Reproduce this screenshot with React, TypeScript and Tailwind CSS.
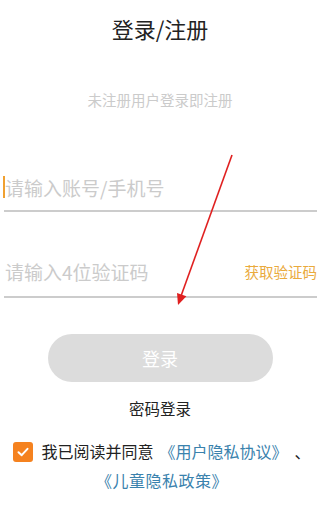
import React from "react";

export default function App() {
  return (
    <div
      className="relative w-[320px] h-[505px] overflow-hidden bg-white flex flex-col"
      style={{ fontFamily: '"Noto Sans CJK SC", "Noto Sans", sans-serif' }}
    >
      <div className="mt-[17px] text-center text-[22px] leading-[22px] text-[#222]">登录/注册</div>
      <div className="mt-[53px] text-center text-[14.5px] leading-[15px] text-[#cbcbcb]">未注册用户登录即注册</div>

      <div className="mt-[65px] ml-[4px] mr-[3px] pb-[8px] border-b-2 border-[#cccccc]">
        <div className="h-[30px] flex items-center">
          <span className="-ml-[1px] w-[2px] h-[22px] bg-[#f0a030]" />
          <span className="text-[19px] leading-[19px] text-[#cbcbcb]">请输入账号/手机号</span>
        </div>
      </div>

      <div className="mt-[44px] ml-[4px] mr-[3px] pb-[10px] border-b-2 border-[#cccccc]">
        <div className="h-[30px] flex items-center justify-between">
          <span className="ml-[1px] text-[19px] leading-[19px] text-[#cbcbcb]">请输入4位验证码</span>
          <span className="text-[14.5px] leading-[15px] text-[#eaaa3c]">获取验证码</span>
        </div>
      </div>

      <div className="mt-[36px] mx-auto w-[225px] h-[48px] rounded-full bg-[#dcdcdc] flex items-center justify-center">
        <span className="text-[18px] leading-[18px] text-white">登录</span>
      </div>

      <div className="mt-[18px] text-center text-[15.5px] leading-[16px] text-[#222]">密码登录</div>

      <div className="mt-[21px] flex items-center justify-center h-[29px] text-[16px] leading-[29px] pl-[4px]">
        <span className="w-[20px] h-[20px] rounded-[3px] bg-[#f5821f] flex items-center justify-center mr-[8px]">
          <svg width="14" height="14" viewBox="0 0 14 14">
            <path d="M2.5 7.2 L5.7 10.2 L11.5 3.8" fill="none" stroke="white" strokeWidth="2" strokeLinecap="round" strokeLinejoin="round" />
          </svg>
        </span>
        <span className="text-[#222]">我已阅读并同意</span>
        <span className="ml-[6px] text-[#3a82ad] whitespace-nowrap">《用户隐私协议》</span>
        <span className="ml-[7px] text-[#222]">、</span>
      </div>
      <div className="flex justify-center h-[29px] ml-[4px] text-[16px] leading-[29px]">
        <span className="text-[#3a82ad] whitespace-nowrap tracking-[0.5px]">《儿童隐私政策》</span>
      </div>

      <svg className="absolute left-0 top-0 pointer-events-none" width="320" height="505" viewBox="0 0 320 505">
        <line x1="232" y1="155" x2="181" y2="296" stroke="#e02020" strokeWidth="1.6" />
        <polygon points="178,305 186.4,296.3 177,292.9" fill="#e02020" />
      </svg>
    </div>
  );
}
